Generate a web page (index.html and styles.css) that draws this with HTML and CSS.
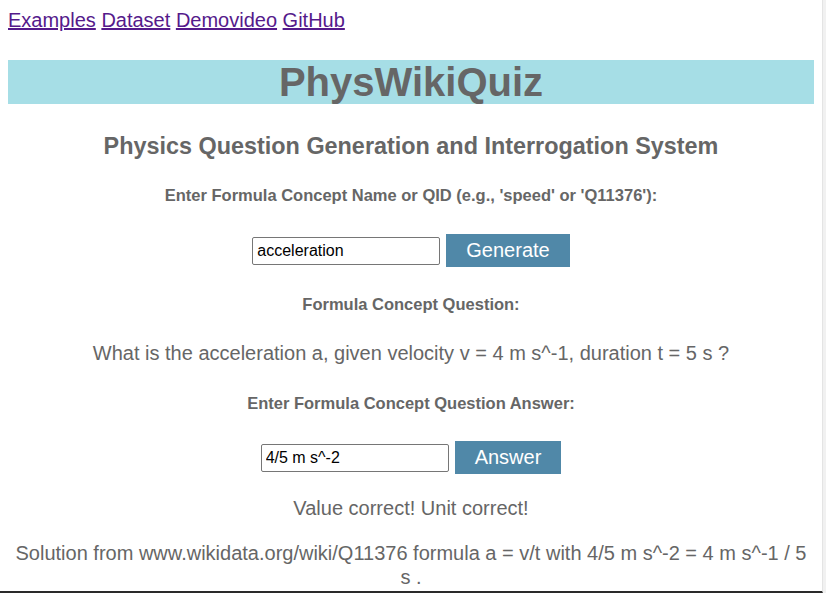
FILE: index.html
```html
<!DOCTYPE html>
<html lang="en">
<head>
<meta charset="utf-8">
<title>PhysWikiQuiz</title>
<link rel="stylesheet" href="styles.css">
</head>
<body>
<div class="window">
  <nav class="links">
    <a href="#">Examples</a> <a href="#">Dataset</a> <a href="#">Demovideo</a> <a href="#">GitHub</a>
  </nav>
  <h1 class="title">PhysWikiQuiz</h1>
  <h2 class="subtitle">Physics Question Generation and Interrogation System</h2>
  <p class="label label-first">Enter Formula Concept Name or QID (e.g., 'speed' or 'Q11376'):</p>
  <form class="row row-first">
    <input class="field" type="text" value="acceleration">
    <button class="btn" type="button">Generate</button>
  </form>
  <p class="label label-q">Formula Concept Question:</p>
  <p class="text question">What is the acceleration a, given velocity v = 4 m s^-1, duration t = 5 s ?</p>
  <p class="label label-a">Enter Formula Concept Question Answer:</p>
  <form class="row row-second">
    <input class="field" type="text" value="4/5 m s^-2">
    <button class="btn" type="button">Answer</button>
  </form>
  <p class="text result">Value correct! Unit correct!</p>
  <p class="text solution">Solution from www.wikidata.org/wiki/Q11376 formula a = v/t with 4/5 m s^-2 = 4 m s^-1 / 5 s .</p>
</div>
</body>
</html>
```
FILE: styles.css
```css
html, body {
  margin: 0;
  padding: 0;
  background: #f1f1f1;
}
.window {
  box-sizing: border-box;
  width: 823px;
  height: 593px;
  padding: 8px 8px 0 8px;
  background: #ffffff;
  border-right: 1px solid #e4e4e4;
  border-bottom: 2px solid #2a2a2a;
  overflow: hidden;
  font-family: "Liberation Sans", Arial, sans-serif;
  color: #666666;
}
.links {
  font-size: 20px;
  line-height: 25px;
}
.links a {
  color: #551a8b;
}
.title {
  margin: 27px 0 0 0;
  background: #a6dee6;
  text-align: center;
  font-size: 40px;
  line-height: 44px;
  font-weight: bold;
  color: #666666;
}
.subtitle {
  margin: 28px 0 0 0;
  text-align: center;
  font-size: 23.4px;
  line-height: 28px;
  font-weight: bold;
}
.label {
  margin: 0;
  text-align: center;
  font-size: 16.5px;
  line-height: 18px;
  font-weight: bold;
}
.label-first { margin-top: 26px; }
.row {
  margin: 30px 0 0 0;
  display: flex;
  justify-content: center;
  align-items: center;
  gap: 6px;
}
.field {
  box-sizing: border-box;
  width: 188px;
  height: 28px;
  margin: 0;
  padding: 0 4px;
  border: 1px solid #767676;
  border-radius: 2px;
  font-family: "Liberation Sans", Arial, sans-serif;
  font-size: 16px;
  color: #000000;
  background: #ffffff;
}
.btn {
  box-sizing: border-box;
  height: 33px;
  margin: 0;
  padding: 0 20px;
  border: none;
  background: #5088a8;
  color: #ffffff;
  font-family: "Liberation Sans", Arial, sans-serif;
  font-size: 20px;
}
.label-q { margin-top: 28px; }
.text {
  margin: 0;
  text-align: center;
  font-size: 20px;
  line-height: 23px;
}
.question { margin-top: 29px; }
.label-a { margin-top: 29px; }
.row-second { margin-top: 29px; }
.result { margin-top: 23px; }
.solution {
  margin-top: 21px;
  line-height: 24px;
}
```
